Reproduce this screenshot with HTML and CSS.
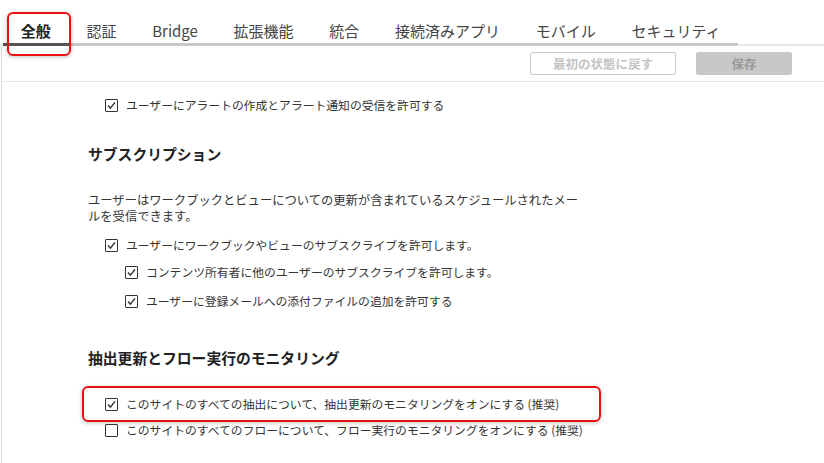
FILE: index.html
```html
<!DOCTYPE html>
<html lang="ja">
<head>
<meta charset="utf-8">
<link rel="stylesheet" href="styles.css">
</head>
<body>
<div class="tabbar">
  <ul class="tabs">
    <li class="tab active">全般</li>
    <li class="tab">認証</li>
    <li class="tab">Bridge</li>
    <li class="tab">拡張機能</li>
    <li class="tab">統合</li>
    <li class="tab">接続済みアプリ</li>
    <li class="tab">モバイル</li>
    <li class="tab">セキュリティ</li>
  </ul>
</div>
<div class="panel">
  <div class="toolbar">
    <button class="btn btn-outline">最初の状態に戻す</button>
    <button class="btn btn-fill">保存</button>
  </div>
  <div class="content">
    <label class="row first">
      <span class="cb checked"><svg viewBox="0 0 13 13" width="13" height="13"><polyline points="3,6.6 5.4,9.2 10,3.4" fill="none" stroke="#333" stroke-width="1.5"/></svg></span>
      <span>ユーザーにアラートの作成とアラート通知の受信を許可する</span>
    </label>

    <h2 class="heading h-sub">サブスクリプション</h2>
    <p class="desc">ユーザーはワークブックとビューについての更新が含まれているスケジュールされたメールを受信できます。</p>
    <label class="row r-sub">
      <span class="cb checked"><svg viewBox="0 0 13 13" width="13" height="13"><polyline points="3,6.6 5.4,9.2 10,3.4" fill="none" stroke="#333" stroke-width="1.5"/></svg></span>
      <span>ユーザーにワークブックやビューのサブスクライブを許可します。</span>
    </label>
    <label class="row nested r-n1">
      <span class="cb checked"><svg viewBox="0 0 13 13" width="13" height="13"><polyline points="3,6.6 5.4,9.2 10,3.4" fill="none" stroke="#333" stroke-width="1.5"/></svg></span>
      <span>コンテンツ所有者に他のユーザーのサブスクライブを許可します。</span>
    </label>
    <label class="row nested r-n2">
      <span class="cb checked"><svg viewBox="0 0 13 13" width="13" height="13"><polyline points="3,6.6 5.4,9.2 10,3.4" fill="none" stroke="#333" stroke-width="1.5"/></svg></span>
      <span>ユーザーに登録メールへの添付ファイルの追加を許可する</span>
    </label>

    <h2 class="heading h-mon">抽出更新とフロー実行のモニタリング</h2>
    <label class="row r-m1 highlight">
      <span class="cb checked"><svg viewBox="0 0 13 13" width="13" height="13"><polyline points="3,6.6 5.4,9.2 10,3.4" fill="none" stroke="#333" stroke-width="1.5"/></svg></span>
      <span>このサイトのすべての抽出について、抽出更新のモニタリングをオンにする (推奨)</span>
    </label>
    <label class="row r-m2">
      <span class="cb"></span>
      <span>このサイトのすべてのフローについて、フロー実行のモニタリングをオンにする (推奨)</span>
    </label>
  </div>
</div>
</body>
</html>
```

FILE: styles.css
```css
* { box-sizing: border-box; }
html, body { margin: 0; padding: 0; background: #fff; }
body {
  font-family: "Noto Sans CJK JP", "Noto Sans", sans-serif;
  color: #333;
  width: 824px;
  height: 463px;
  overflow: hidden;
}

.tabbar {
  display: flex;
  padding-left: 3px;
  box-shadow: inset 0 -2px 0 #e8e8e8;
}
.tabs {
  display: flex;
  list-style: none;
  margin: 0;
  padding: 0;
}
.tab {
  position: relative;
  font-size: 15px;
  line-height: 20px;
  padding: 21px 17.85px 2px;
  border-bottom: 3px solid #c8c8c8;
  color: #444;
  white-space: nowrap;
}
.tab.active {
  font-weight: bold;
  color: #222;
  border-bottom-color: #555;
}
.tab.active::after {
  content: "";
  position: absolute;
  left: 4px;
  top: 12px;
  width: 60px;
  height: 40px;
  border: 2px solid #ee1111;
  border-radius: 6px;
  box-shadow: 0 1px 4px rgba(0,0,0,0.25);
  z-index: 2;
}

.panel {
  margin-left: 1px;
  border-left: 1px solid #d8d8d8;
  height: 417px;
}
.toolbar {
  display: flex;
  justify-content: flex-end;
  gap: 20px;
  padding: 6px 32px 6px 0;
  border-bottom: 1px solid #e6e6e6;
}
.btn {
  font-family: inherit;
  font-size: 12.5px;
  font-weight: bold;
  height: 23px;
  padding: 0;
  border-radius: 2px;
}
.btn-outline {
  width: 146px;
  background: #fff;
  border: 1px solid #c8c8c8;
  color: #c4c4c4;
}
.btn-fill {
  width: 96px;
  background: #c8c8c8;
  border: 1px solid #c8c8c8;
  color: #999;
}

.content {
  padding-left: 86px;
  font-size: 12.3px;
}
.row {
  position: relative;
  display: flex;
  align-items: center;
  gap: 8px;
  margin-left: 17px;
  line-height: 20px;
  font-size: 11.8px;
  color: #333;
}
.row.nested { margin-left: 37px; }
.cb {
  flex: none;
  width: 13px;
  height: 13px;
  border: 1px solid #333;
  border-radius: 1px;
  display: flex;
  position: relative;
}
.cb svg { position: absolute; left: -1px; top: -1px; }

.row.first { margin-top: 13px; }
.heading {
  font-size: 14.8px;
  font-weight: bold;
  margin: 0;
  line-height: 22px;
  color: #222;
}
.h-sub { margin-top: 28px; }
.desc {
  margin: 27px 0 0;
  line-height: 16px;
  width: 500px;
}
.r-sub { margin-top: 11px; }
.r-n1 { margin-top: 7px; }
.r-n2 { margin-top: 9px; }
.h-mon { margin-top: 36px; }
.r-m1 { margin-top: 25px; }
.r-m2 { margin-top: 6px; }

.highlight::before {
  content: "";
  position: absolute;
  left: -23px;
  top: -8px;
  width: 515px;
  height: 32px;
  border: 2px solid #ee1111;
  border-radius: 6px;
  box-shadow: 0 1px 4px rgba(0,0,0,0.25);
}
```
